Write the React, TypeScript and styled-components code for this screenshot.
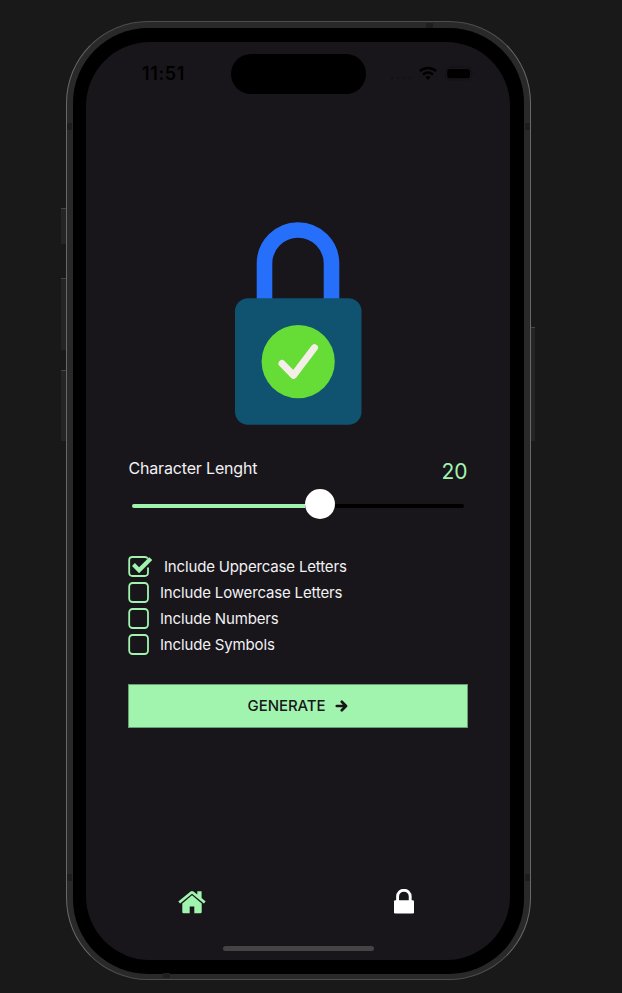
import React, { useState } from "react";
import styled, { createGlobalStyle } from "styled-components";

const mint = "#a1f4ae";

const GlobalStyle = createGlobalStyle`
  * { box-sizing: border-box; }
  body { margin: 0; background: #19191a; font-family: Inter, "Liberation Sans", sans-serif; }
`;

const Desktop = styled.main`
  width: 622px;
  height: 993px;
  padding: 21px 0 0 66px;
  overflow: hidden;
  background: #19191a;
`;

const Frame = styled.div`
  position: relative;
  width: 465px;
  height: 959px;
  padding: 6px 6px 5px;
  border: 1px solid #686868;
  border-top-color: #4d4d4d;
  border-bottom-color: #4d4d4d;
  border-radius: 82px;
  background: #292929;
`;

const SideButton = styled.span<{ $side: "left" | "right"; $top: number; $height: number }>`
  position: absolute;
  ${(p) => p.$side}: ${(p) => (p.$side === "left" ? -6 : -5)}px;
  top: ${(p) => p.$top}px;
  width: ${(p) => (p.$side === "left" ? 5 : 4)}px;
  height: ${(p) => p.$height}px;
  border-top: 1px solid #454545;
  background: #252525;
`;

const Antenna = styled.span<{ $x: number; $y: number; $flat?: boolean }>`
  position: absolute;
  left: ${(p) => p.$x}px;
  top: ${(p) => p.$y}px;
  width: ${(p) => (p.$flat ? 7 : 5)}px;
  height: ${(p) => (p.$flat ? 5 : 7)}px;
  background: #1e1e1e;
`;

const Bezel = styled.div`
  height: 100%;
  padding: 14px 14px 13px 13px;
  border-radius: 75px;
  background: #000;
`;

const Screen = styled.div`
  display: flex;
  flex-direction: column;
  width: 424px;
  height: 918px;
  border-radius: 64px;
  overflow: hidden;
  background: #18161b;
`;

const StatusBar = styled.header`
  display: grid;
  grid-template-columns: 144.5px 135px 144.5px;
  height: 52px;
  padding-top: 12px;
  color: #000;
`;

const Clock = styled.span`
  padding: 8px 0 0 56px;
  font-size: 18px;
  line-height: 24px;
  font-weight: 600;
  letter-spacing: 0.6px;
`;

const Island = styled.span`
  height: 40px;
  border-radius: 20px;
  background: #000;
`;

const StatusIcons = styled.svg`
  width: 90px;
  height: 16px;
  margin: 12px 0 0 20px;
`;

const Content = styled.section`
  display: flex;
  flex-direction: column;
  flex: 1;
  padding: 126px 42px 0;
`;

const Padlock = styled.svg`
  width: 128px;
  height: 205px;
  margin-left: 106px;
`;

const LengthHeader = styled.div`
  display: flex;
  justify-content: space-between;
  height: 30px;
  margin: 33px 0.5px 0;
`;

const Label = styled.span`
  color: #f2f1f3;
  font-size: 16px;
  line-height: 20px;
  letter-spacing: -0.17px;
`;

const LengthValue = styled.span`
  color: ${mint};
  font-size: 21px;
  line-height: 27px;
`;

const Slider = styled.div`
  display: grid;
  grid-template-columns: 173px 30px 129px;
  align-items: center;
  height: 30px;
  margin: 1px 4px 0;
`;

const Track = styled.span<{ $active?: boolean }>`
  height: 4px;
  margin-top: 3px;
  border-radius: ${(p) => (p.$active ? "2px 0 0 2px" : "0 2px 2px 0")};
  background: ${(p) => (p.$active ? mint : "#000")};
`;

const Thumb = styled.span`
  width: 30px;
  height: 30px;
  border-radius: 50%;
  background: #fff;
`;

const Options = styled.div`
  display: flex;
  flex-direction: column;
  margin-top: 34px;
`;

const Option = styled.button`
  display: flex;
  align-items: center;
  gap: 11px;
  height: 26px;
  padding: 0;
  border: 0;
  background: none;
  color: #f2f1f3;
  font: 15px/22px Inter, "Liberation Sans", sans-serif;
  letter-spacing: -0.16px;
  text-align: left;
`;

const OptionText = styled.span`
  padding-top: 2px;
`;

const Generate = styled.button`
  display: flex;
  align-items: center;
  justify-content: center;
  gap: 10px;
  height: 44px;
  margin-top: 27px;
  padding: 0;
  border: 1px solid #6a9e74;
  background: ${mint};
  color: #18161b;
  font: 500 15px/20px Inter, "Liberation Sans", sans-serif;
  letter-spacing: -0.08px;
`;

const TabBar = styled.nav`
  display: grid;
  grid-template-columns: 1fr 1fr;
  justify-items: center;
  height: 57px;
`;

const HomeIndicator = styled.div`
  width: 151px;
  height: 5px;
  margin: 0 auto 9px;
  border-radius: 3px;
  background: #444445;
`;

function CheckIcon({ checked }: { checked: boolean }) {
  return checked ? (
    <svg width="25" height="21" viewBox="0 0 25 21" fill="none">
      <path d="M19.8 2.6Q19 1 16.7 1H4.5Q1.2 1 1.2 4.3v12.2Q1.2 20 4.5 20h12.2q3.3 0 3.3-3.5v-5" stroke={mint} strokeWidth="1.8" />
      <path d="M4 10l2.9-2.9 4.2 4.1L21.2 1.2l3.1 2.9L11.1 17.2z" fill={mint} />
    </svg>
  ) : (
    <svg width="21" height="21" viewBox="0 0 21 21" fill="none">
      <rect x="1.2" y="1" width="18.8" height="19" rx="3.4" stroke={mint} strokeWidth="1.8" />
    </svg>
  );
}

const initialOptions = [
  { label: "Include Uppercase Letters", checked: true },
  { label: "Include Lowercase Letters", checked: false },
  { label: "Include Numbers", checked: false },
  { label: "Include Symbols", checked: false },
];

export default function App() {
  const [options, setOptions] = useState(initialOptions);
  const toggle = (label: string) =>
    setOptions((list) => list.map((o) => (o.label === label ? { ...o, checked: !o.checked } : o)));

  return (
    <>
      <GlobalStyle />
      <Desktop>
        <Frame>
          <SideButton $side="left" $top={186} $height={36} />
          <SideButton $side="left" $top={256} $height={72} />
          <SideButton $side="left" $top={348} $height={71} />
          <SideButton $side="right" $top={305} $height={114} />
          <Antenna $x={0} $y={101} />
          <Antenna $x={458} $y={101} />
          <Antenna $x={0} $y={852} />
          <Antenna $x={458} $y={852} />
          <Antenna $x={359} $y={1} $flat />
          <Antenna $x={96} $y={951} $flat />
          <Bezel>
            <Screen>
              <StatusBar>
                <Clock>11:51</Clock>
                <Island />
                <StatusIcons viewBox="0 0 90 16">
                  <g fill="#141217">
                    <circle cx="6" cy="12" r="1.4" />
                    <circle cx="12" cy="12" r="1.4" />
                    <circle cx="18" cy="12" r="1.4" />
                    <circle cx="24" cy="12" r="1.4" />
                  </g>
                  <g fill="none" stroke="#000" strokeWidth="2.5">
                    <path d="M33.8 5.2a12 12 0 0 1 16.4 0" />
                    <path d="M37 8.6a7.2 7.2 0 0 1 10 0" />
                  </g>
                  <path d="M39.4 11.3a3.8 3.8 0 0 1 5.2 0L42 14z" />
                  <rect x="59.5" y="1" width="26" height="13" rx="4" fill="none" stroke="#121114" />
                  <rect x="61.2" y="3" width="22.8" height="9.2" rx="2.6" />
                  <path d="M87 5.5q2 2 0 4z" fill="#121114" />
                </StatusIcons>
              </StatusBar>
              <Content>
                <Padlock viewBox="0 0 128 205">
                  <path d="M30.5 84V43.5a33.5 33.5 0 0 1 67 0V84" fill="none" stroke="#266ffb" strokeWidth="15.6" />
                  <rect x="1" y="78.3" width="126.5" height="126.5" rx="13" fill="#0f5370" />
                  <circle cx="64.2" cy="141.6" r="36.6" fill="#66dd37" />
                  <path d="M48 143.5l11.5 11.8L80.5 127.7" fill="none" stroke="#f4eee8" strokeWidth="7" strokeLinecap="round" strokeLinejoin="round" />
                </Padlock>
                <LengthHeader>
                  <Label>Character Lenght</Label>
                  <LengthValue>20</LengthValue>
                </LengthHeader>
                <Slider>
                  <Track $active />
                  <Thumb />
                  <Track />
                </Slider>
                <Options>
                  {options.map((o) => (
                    <Option key={o.label} onClick={() => toggle(o.label)}>
                      <CheckIcon checked={o.checked} />
                      <OptionText>{o.label}</OptionText>
                    </Option>
                  ))}
                </Options>
                <Generate>
                  GENERATE
                  <svg width="13" height="12" viewBox="0 0 13 12" fill="none" stroke="#18161b" strokeWidth="2.7" strokeLinecap="round" strokeLinejoin="round">
                    <path d="M1.8 6h9M6.8 1.7L11 6l-4.2 4.3" />
                  </svg>
                </Generate>
              </Content>
              <TabBar>
                <svg width="28" height="26" viewBox="0 0 28 26" fill={mint}>
                  <path d="M4.3 14.4L14 6.2l9.7 8.2V23q0 1.3-1.3 1.3h-6.1v-6.8h-4.6v6.8H5.6q-1.3 0-1.3-1.3z" />
                  <path d="M.3 12.5L12.6 2.4q1.4-1 2.8 0l3.9 3.2V2.2h4.3V9l4.1 3.5-1.8 2L14 4.8 2.1 14.5z" />
                </svg>
                <svg width="22" height="26" viewBox="0 0 22 26">
                  <path d="M4.6 12V7.5a6.3 6.3 0 0 1 12.6 0V12" fill="none" stroke="#fff" strokeWidth="2.9" />
                  <rect x="1" y="11.3" width="20" height="13.2" rx="1.3" fill="#fff" />
                </svg>
              </TabBar>
              <HomeIndicator />
            </Screen>
          </Bezel>
        </Frame>
      </Desktop>
    </>
  );
}
